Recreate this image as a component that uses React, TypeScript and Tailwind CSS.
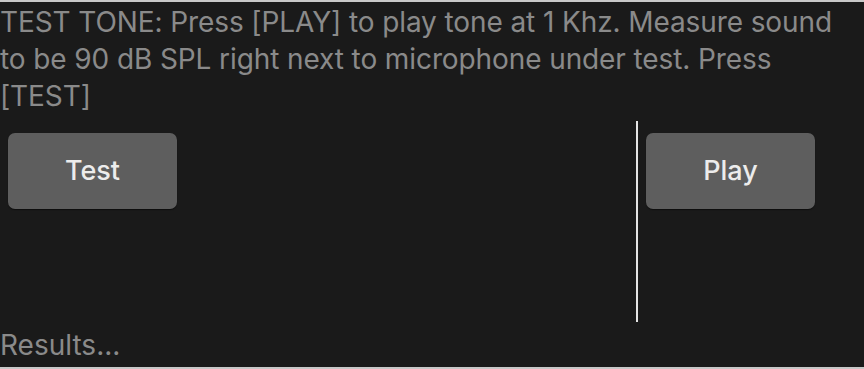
export default function App() {
  return (
    <div className="w-[864px] h-[369px] bg-[#1a1a1a] flex flex-col overflow-hidden" style={{ fontFamily: "Inter, 'Noto Sans', sans-serif" }}>
      <div className="h-[2px] bg-[#c8c8c8] shrink-0" />
      <div className="text-[28px] leading-[37px] text-[#8a8a8a] pt-[2px] tracking-[-0.1px]">
        TEST TONE: Press [PLAY] to play tone at 1 Khz. Measure sound to be 90 dB SPL right next to microphone under test. Press [TEST]
      </div>
      <div className="flex mt-[6px] h-[201px] shrink-0">
        <div className="flex-1 pl-[8px] pt-[12px]">
          <button className="w-[169px] h-[76px] rounded-[7px] bg-[#5e5e5e] text-[#ececec] text-[27px] font-medium shadow-[0_1px_1px_rgba(0,0,0,0.5)]">Test</button>
        </div>
        <div className="w-[2px] bg-[#e4e4e4]" />
        <div className="w-[226px] pl-[8px] pt-[12px]">
          <button className="w-[169px] h-[76px] rounded-[7px] bg-[#5e5e5e] text-[#ececec] text-[27px] font-medium shadow-[0_1px_1px_rgba(0,0,0,0.5)]">Play</button>
        </div>
      </div>
      <div className="flex-1 pt-[2px] text-[28px] leading-[43px] text-[#8a8a8a]">Results...</div>
      <div className="h-[2px] bg-[#c8c8c8] shrink-0" />
    </div>
  );
}
